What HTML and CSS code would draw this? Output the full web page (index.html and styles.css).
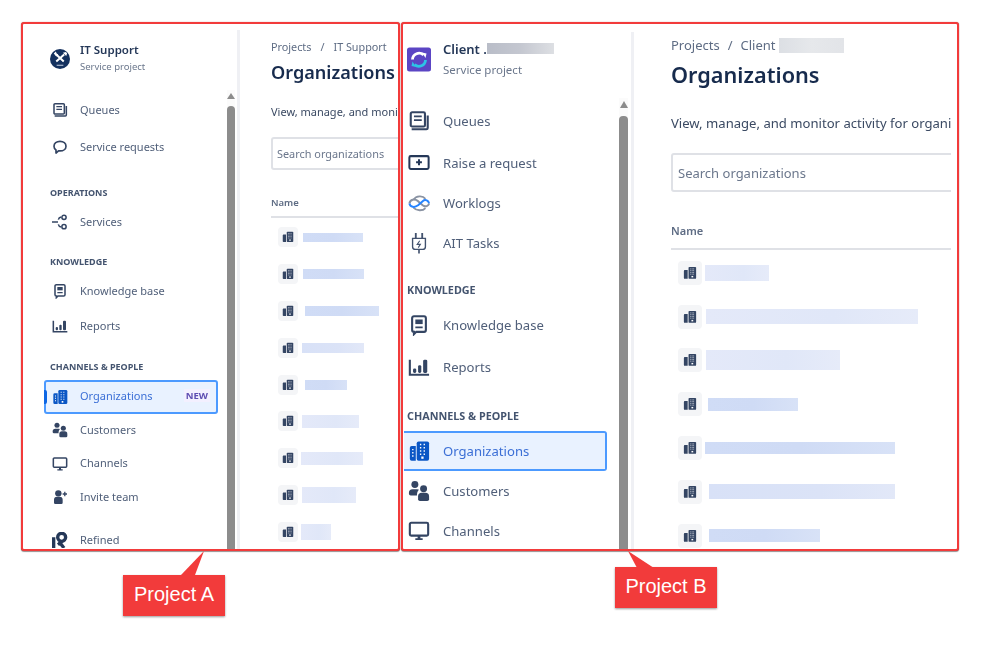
FILE: index.html
```html
<!DOCTYPE html>
<html lang="en">
<head>
    <meta charset="UTF-8">
    <title>Project A and Project B organizations</title>
    <link rel="stylesheet" href="styles.css">
</head>
<body>

    <!-- icon set, reused through <use> -->
    <svg class="icon-defs" aria-hidden="true">
        <symbol id="i-queues" viewBox="0 0 24 24">
            <rect x="3" y="2.500" width="15.500" height="15.500" rx="1.500" fill="none" stroke="currentColor" stroke-width="2.300"/>
            <path d="M6.500 7h8.500M6.500 11h8.500" stroke="currentColor" stroke-width="2"/>
            <path d="M21.500 6v13.500a1.500 1.500 0 0 1-1.500 1.500H4" fill="none" stroke="currentColor" stroke-width="2.300"/>
        </symbol>
        <symbol id="i-chat" viewBox="0 0 24 24">
            <path d="M12 3.500c5.200 0 9 2.900 9 7.200s-3.800 7.200-9 7.200c-.8 0-1.500-.1-2.200-.2L6 21v-4.500C4 15.200 3 13 3 10.700 3 6.400 6.800 3.500 12 3.500z" fill="none" stroke="currentColor" stroke-width="2.500" stroke-linejoin="round"/>
        </symbol>
        <symbol id="i-services" viewBox="0 0 24 24">
            <circle cx="18" cy="5" r="3.200" fill="none" stroke="currentColor" stroke-width="2.300"/>
            <circle cx="18" cy="19" r="3.200" fill="none" stroke="currentColor" stroke-width="2.300"/>
            <path d="M0 12h9M13.500 4.500c-2.500.5-3.500 2-4 4M13.500 19.500c-2.500-.5-3.500-2-4-4" fill="none" stroke="currentColor" stroke-width="2.300"/>
        </symbol>
        <symbol id="i-knowledge" viewBox="0 0 24 24">
            <path d="M6.500 2.500h11a2 2 0 0 1 2 2v13a2 2 0 0 1-2 2H9l-2.500 2.500v-2.500a2 2 0 0 1-2-2v-13a2 2 0 0 1 2-2z" fill="none" stroke="currentColor" stroke-width="2.300"/>
            <rect x="8" y="6" width="8" height="5" fill="currentColor"/>
            <path d="M8 14.500h8" stroke="currentColor" stroke-width="2"/>
        </symbol>
        <symbol id="i-reports" viewBox="0 0 24 24">
            <path d="M2 4v16.500h21" fill="none" stroke="currentColor" stroke-width="2.300"/>
            <rect x="5.500" y="13.500" width="3.500" height="5" rx="1.500" fill="currentColor"/>
            <rect x="11" y="10" width="3.500" height="8.500" rx="1.500" fill="currentColor"/>
            <rect x="16.500" y="4" width="4.500" height="14.500" rx="1.500" fill="currentColor"/>
        </symbol>
        <symbol id="i-org" viewBox="0 0 24 24">
            <path d="M4 6.500h4.500v16H4a2 2 0 0 1-2-2v-12a2 2 0 0 1 2-2z" fill="currentColor"/>
            <path d="M11.500 1.500H21a2 2 0 0 1 2 2v17a2 2 0 0 1-2 2h-9.500a2 2 0 0 1-2-2v-17a2 2 0 0 1 2-2z" fill="currentColor"/>
            <path d="M4.500 10.500h1.500M4.500 14h1.500M4.500 17.500h1.500" stroke="#fff" stroke-width="1.600"/>
            <path d="M13 5h1.500M13 8.500h1.500M13 12h1.500M13 15.500h1.500M17 5h1.500M17 8.500h1.500M17 12h1.500M17 15.500h1.500" stroke="#fff" stroke-width="1.600"/>
            <rect x="14.500" y="18" width="2.500" height="2.500" fill="#fff"/>
        </symbol>
        <symbol id="i-customers" viewBox="0 0 24 24">
            <circle cx="7.500" cy="5" r="3.800" fill="currentColor"/>
            <circle cx="17" cy="9.500" r="3.800" fill="currentColor"/>
            <path d="M1 14a4 4 0 0 1 4-4h5a4 4 0 0 1 2 .6c-1.500 1.500-2.200 3-2.200 6.400H3a2 2 0 0 1-2-2z" fill="currentColor"/>
            <path d="M11 18a4 4 0 0 1 4-4h4a4 4 0 0 1 4 4v3a2 2 0 0 1-2 2h-8a2 2 0 0 1-2-2z" fill="currentColor"/>
        </symbol>
        <symbol id="i-channels" viewBox="0 0 24 24">
            <rect x="2" y="3" width="20" height="14" rx="1.500" fill="none" stroke="currentColor" stroke-width="2.300"/>
            <path d="M10.500 17h3v3h2.500v1.800H8V20h2.500z" fill="currentColor"/>
        </symbol>
        <symbol id="i-invite" viewBox="0 0 24 24">
            <circle cx="9.500" cy="6.500" r="4.800" fill="currentColor"/>
            <path d="M3 16a4.500 4.500 0 0 1 4.500-4.500h4A4.500 4.500 0 0 1 16 16v4.500a2 2 0 0 1-2 2H5a2 2 0 0 1-2-2z" fill="currentColor"/>
            <path d="M16 7.500h6.500M19.200 4.300v6.400" stroke="currentColor" stroke-width="2"/>
        </symbol>
        <symbol id="i-refined" viewBox="0 0 24 24">
            <path d="M2.500 24V8" fill="none" stroke="#253858" stroke-width="5"/>
            <path d="M9 19l6-5" fill="none" stroke="#253858" stroke-width="5"/>
            <path d="M18 24l-7-9" fill="none" stroke="#253858" stroke-width="5"/>
            <circle cx="14.500" cy="8" r="6" fill="none" stroke="#253858" stroke-width="5"/>
        </symbol>
        <symbol id="i-raise" viewBox="0 0 24 24">
            <rect x="1.500" y="4.500" width="21" height="14" rx="1.500" fill="none" stroke="#253858" stroke-width="2.200"/>
            <path d="M12 8v6.500M8.800 11.200h6.400" stroke="#253858" stroke-width="2.200"/>
        </symbol>
        <symbol id="i-worklogs" viewBox="0 0 24 24">
            <path d="M6 8.500c3-4.500 10-5 13-1M6 17c3 3.500 10 4 13 .5" fill="none" stroke="#8a93a3" stroke-width="2"/>
            <path d="M1.500 12.500C2.500 8 7 7 11 10l5 4.500c3 2.500 6.500 .5 7-2" fill="none" stroke="#8a93a3" stroke-width="2.200"/>
            <path d="M1.500 12.500c1 4 5.500 5 9.500 2l5-4.500c3-2.500 6.500-.5 7 2.500" fill="none" stroke="#2684ff" stroke-width="2.200"/>
        </symbol>
        <symbol id="i-plug" viewBox="0 0 24 24">
            <path d="M8.500 1v6M15.500 1v6" stroke="#42526e" stroke-width="2"/>
            <path d="M5 7h14v9a3 3 0 0 1-3 3H8a3 3 0 0 1-3-3z" fill="none" stroke="#42526e" stroke-width="1.500"/>
            <path d="M12.800 9.500L10 13.500h3.500L11.200 17" fill="none" stroke="#42526e" stroke-width="1.200"/>
            <path d="M12 19v4.500" stroke="#42526e" stroke-width="1.800"/>
        </symbol>
        <symbol id="i-tile" viewBox="0 0 24 24">
            <path d="M3 7h5v15H3a1.500 1.500 0 0 1-1.500-1.500v-12A1.500 1.500 0 0 1 3 7z" fill="currentColor"/>
            <path d="M11 1.500h10A1.500 1.500 0 0 1 22.500 3v17.500A1.500 1.500 0 0 1 21 22H11a1.500 1.500 0 0 1-1.500-1.500V3A1.500 1.500 0 0 1 11 1.500z" fill="currentColor"/>
            <path d="M12.500 5h7M12.500 8h7M12.500 11h7M12.500 14h7" stroke="#dfe3ea" stroke-width="1.300" stroke-dasharray="1.500 1"/>
            <rect x="14.500" y="17" width="3" height="2.500" fill="#fff"/>
        </symbol>
    </svg>

    <div class="stage">

        <!-- Project A -->
        <section class="panel panel-a">
            <div class="sidebar">
                <div class="project">
                    <svg class="project-logo" viewBox="0 0 24 24">
                        <circle cx="12" cy="12" r="12" fill="#14315f"/>
                        <path d="M7.500 6.500l9 8.500M17 6.500L7.500 15" stroke="#fff" stroke-width="2.400"/>
                        <path d="M4.500 5.500L7 3l1 2.500 2 1L7.500 9z" fill="#fff"/>
                        <path d="M15.500 4.500l3.500-1 1.500 1.500-1 3.500z" fill="#fff"/>
                        <path d="M8 19.500h8" stroke="#c6d0e0" stroke-width="1.400"/>
                    </svg>
                    <div>
                        <div class="project-name">IT Support</div>
                        <div class="project-type">Service project</div>
                    </div>
                </div>

                <div class="nav-group group-first">
                    <a class="nav-item"><svg class="nav-icon"><use href="#i-queues"/></svg>Queues</a>
                    <a class="nav-item spaced"><svg class="nav-icon"><use href="#i-chat"/></svg>Service requests</a>
                </div>
                <div class="nav-group group-ops">
                    <div class="nav-title">OPERATIONS</div>
                    <a class="nav-item"><svg class="nav-icon"><use href="#i-services"/></svg>Services</a>
                </div>
                <div class="nav-group group-know">
                    <div class="nav-title">KNOWLEDGE</div>
                    <a class="nav-item"><svg class="nav-icon"><use href="#i-knowledge"/></svg>Knowledge base</a>
                    <a class="nav-item nudge"><svg class="nav-icon"><use href="#i-reports"/></svg>Reports</a>
                </div>
                <div class="nav-group group-chan">
                    <div class="nav-title">CHANNELS &amp; PEOPLE</div>
                    <a class="nav-item active"><svg class="nav-icon"><use href="#i-org"/></svg>Organizations<span class="badge">NEW</span></a>
                    <a class="nav-item"><svg class="nav-icon"><use href="#i-customers"/></svg>Customers</a>
                    <a class="nav-item"><svg class="nav-icon"><use href="#i-channels"/></svg>Channels</a>
                    <a class="nav-item"><svg class="nav-icon"><use href="#i-invite"/></svg>Invite team</a>
                </div>
                <div class="nav-group group-apps">
                    <a class="nav-item"><svg class="nav-icon"><use href="#i-refined"/></svg>Refined</a>
                </div>
            </div>

            <div class="scrollbar"><span class="scroll-arrow"></span><span class="scroll-thumb"></span></div>
            <div class="divider"></div>

            <main class="content">
                <div class="crumbs">Projects<span class="crumb-sep">/</span>IT Support</div>
                <h1>Organizations</h1>
                <p class="intro">View, manage, and moni</p>
                <div class="search">Search organizations</div>
                <div class="col-head">Name</div>
                <div class="org-row"><span class="tile"><svg><use href="#i-tile"/></svg></span><span class="bar bar-mid" style="margin-left:5px;width:60px;height:9px"></span></div>
                <div class="org-row"><span class="tile"><svg><use href="#i-tile"/></svg></span><span class="bar bar-mid" style="margin-left:5px;width:61px;height:10px"></span></div>
                <div class="org-row"><span class="tile"><svg><use href="#i-tile"/></svg></span><span class="bar bar-mid" style="margin-left:7px;width:74px;height:10px"></span></div>
                <div class="org-row"><span class="tile"><svg><use href="#i-tile"/></svg></span><span class="bar" style="margin-left:4px;width:62px;height:10px"></span></div>
                <div class="org-row"><span class="tile"><svg><use href="#i-tile"/></svg></span><span class="bar bar-mid" style="margin-left:7px;width:42px;height:10px"></span></div>
                <div class="org-row"><span class="tile"><svg><use href="#i-tile"/></svg></span><span class="bar bar-light" style="margin-left:4px;width:57px;height:13px"></span></div>
                <div class="org-row"><span class="tile"><svg><use href="#i-tile"/></svg></span><span class="bar bar-light" style="margin-left:3px;width:62px;height:13px"></span></div>
                <div class="org-row"><span class="tile"><svg><use href="#i-tile"/></svg></span><span class="bar bar-light" style="margin-left:4px;width:54px;height:16px"></span></div>
                <div class="org-row"><span class="tile"><svg><use href="#i-tile"/></svg></span><span class="bar bar-light" style="margin-left:3px;width:30px;height:16px"></span></div>
            </main>
        </section>

        <!-- Project B -->
        <section class="panel panel-b">
            <div class="sidebar">
                <div class="project">
                    <svg class="project-logo" viewBox="0 0 24 24">
                        <rect width="24" height="24" rx="2.500" fill="#5b45c4"/>
                        <path d="M5.500 12a6.500 6.500 0 0 1 11-4.500" fill="none" stroke="#fff" stroke-width="2.800"/>
                        <path d="M15 5l4.500 1-1 4.500z" fill="#fff"/>
                        <path d="M18.500 12.500a6.500 6.500 0 0 1-11 4.500" fill="none" stroke="#2cc4e6" stroke-width="2.800"/>
                        <path d="M9 19.500l-4.500-1 1-4.500z" fill="#2cc4e6"/>
                    </svg>
                    <div>
                        <div class="project-name">Client .<span class="redact redact-dark"></span></div>
                        <div class="project-type">Service project</div>
                    </div>
                </div>

                <div class="nav-group group-first">
                    <a class="nav-item"><svg class="nav-icon"><use href="#i-queues"/></svg>Queues</a>
                    <a class="nav-item spaced"><svg class="nav-icon"><use href="#i-raise"/></svg>Raise a request</a>
                    <a class="nav-item"><svg class="nav-icon"><use href="#i-worklogs"/></svg>Worklogs</a>
                    <a class="nav-item"><svg class="nav-icon"><use href="#i-plug"/></svg>AIT Tasks</a>
                </div>
                <div class="nav-group group-know">
                    <div class="nav-title">KNOWLEDGE</div>
                    <a class="nav-item"><svg class="nav-icon"><use href="#i-knowledge"/></svg>Knowledge base</a>
                    <a class="nav-item spaced"><svg class="nav-icon"><use href="#i-reports"/></svg>Reports</a>
                </div>
                <div class="nav-group group-chan">
                    <div class="nav-title">CHANNELS &amp; PEOPLE</div>
                    <a class="nav-item active"><svg class="nav-icon"><use href="#i-org"/></svg>Organizations</a>
                    <a class="nav-item"><svg class="nav-icon"><use href="#i-customers"/></svg>Customers</a>
                    <a class="nav-item"><svg class="nav-icon"><use href="#i-channels"/></svg>Channels</a>
                </div>
            </div>

            <div class="scrollbar"><span class="scroll-arrow"></span><span class="scroll-thumb"></span></div>
            <div class="divider"></div>

            <main class="content">
                <div class="crumbs">Projects<span class="crumb-sep">/</span>Client<span class="redact"></span></div>
                <h1>Organizations</h1>
                <p class="intro">View, manage, and monitor activity for organi</p>
                <div class="search">Search organizations</div>
                <div class="col-head">Name</div>
                <div class="org-row"><span class="tile"><svg><use href="#i-tile"/></svg></span><span class="bar bar-light" style="margin-left:3px;width:64px;height:16px"></span></div>
                <div class="org-row"><span class="tile"><svg><use href="#i-tile"/></svg></span><span class="bar bar-light" style="margin-left:4px;width:212px;height:15px"></span></div>
                <div class="org-row"><span class="tile"><svg><use href="#i-tile"/></svg></span><span class="bar bar-light" style="margin-left:4px;width:134px;height:20px"></span></div>
                <div class="org-row"><span class="tile"><svg><use href="#i-tile"/></svg></span><span class="bar bar-mid" style="margin-left:6px;width:90px;height:13px"></span></div>
                <div class="org-row"><span class="tile"><svg><use href="#i-tile"/></svg></span><span class="bar bar-mid" style="margin-left:3px;width:190px;height:12px"></span></div>
                <div class="org-row"><span class="tile"><svg><use href="#i-tile"/></svg></span><span class="bar" style="margin-left:7px;width:186px;height:15px"></span></div>
                <div class="org-row"><span class="tile"><svg><use href="#i-tile"/></svg></span><span class="bar bar-mid" style="margin-left:7px;width:111px;height:13px"></span></div>
            </main>
        </section>
    </div>

    <!-- annotation labels -->
    <div class="callout callout-a">
        <svg class="callout-tail" viewBox="0 0 30 26"><polygon points="23,0 0,24 14,24" fill="#f23b3b"/></svg>
        Project A
    </div>
    <div class="callout callout-b">
        <svg class="callout-tail" viewBox="0 0 30 18"><polygon points="0,0 9,17 26,17" fill="#f23b3b"/></svg>
        Project B
    </div>

</body>
</html>
```

FILE: styles.css
```css
body {
    margin: 0;
    height: 655px;
    overflow: hidden;
    position: relative;
    background-color: white;
    font-family: "Noto Sans", "Open Sans", sans-serif;
    color: #42526e;
}

.icon-defs {
    display: none;
}

/* the reference is a scaled-up capture, so everything is a little soft */
.stage {
    display: flex;
    gap: 1px;
    padding: 22px 0 0 21px;
    filter: blur(0.3px);
}

.panel {
    display: flex;
    box-sizing: border-box;
    height: 529px;
    border: 2px solid #f23b3b;
    border-radius: 3px;
    box-shadow: 0 0 1px rgba(120, 0, 0, 0.6), 0 1px 1px rgba(0, 0, 0, 0.4);
    overflow: hidden;
    background-color: white;
}

.panel-a {
    width: 379px;
}

.panel-b {
    width: 558px;
}

/* sidebar */

.sidebar {
    flex: none;
    box-sizing: border-box;
}

.project {
    display: flex;
    align-items: center;
}

.project-name {
    font-weight: 600;
    color: #253858;
    white-space: nowrap;
}

.project-type {
    color: #6b778c;
    white-space: nowrap;
}

.nav-group {
    display: flex;
    flex-direction: column;
}

.nav-title {
    font-weight: 700;
    color: #44546f;
    white-space: nowrap;
}

.nav-item {
    display: flex;
    align-items: center;
    flex: none;
    box-sizing: border-box;
    position: relative;
    color: #505f79;
    white-space: nowrap;
}

.nav-icon {
    flex: none;
    color: #344563;
}

.active {
    background-color: #e9f2ff;
    border: 2px solid #4c9aff;
    border-radius: 3px;
    color: #3b6fd6;
}

.active .nav-icon {
    color: #0b57c5;
}

.badge {
    margin-left: auto;
    padding: 0 2px;
    background-color: #f3f0ff;
    color: #5e4db2;
    font-weight: 700;
}

.redact {
    display: inline-block;
    background: linear-gradient(90deg, #dcdfe4, #e6e8eb 50%, #e2e4e8);
}

.redact-dark {
    background: linear-gradient(90deg, #b9bdc8, #c4c7d0 50%, #dddfe3);
}

/* scrollbar and the thin line next to it */

.scrollbar {
    flex: none;
    display: flex;
    flex-direction: column;
    align-items: center;
    background-color: #fbfbfb;
}

.scroll-arrow {
    flex: none;
    width: 0;
    height: 0;
    border-style: solid;
    border-color: transparent transparent #8c8c8c;
}

.scroll-thumb {
    flex: 1;
    width: 100%;
    background-color: #8c8c8c;
    border-radius: 4px 4px 0 0;
}

.divider {
    flex: none;
    background-color: #eff0f4;
}

/* main column */

.content {
    flex: 1;
    min-width: 0;
    overflow: hidden;
}

.crumbs {
    display: flex;
    align-items: center;
    color: #5e6c84;
    white-space: nowrap;
}

h1 {
    margin: 0;
    font-weight: 600;
    color: #172b4d;
    white-space: nowrap;
}

.intro {
    margin: 0;
    color: #3b4a63;
    white-space: nowrap;
}

.search {
    display: flex;
    align-items: center;
    box-sizing: border-box;
    width: 420px;
    border: 2px solid #dfe1e6;
    border-radius: 3px;
    color: #6b778c;
}

.col-head {
    margin-bottom: 1px;
    font-weight: 600;
    color: #5e6c84;
    border-bottom: 2px solid #dfe1e6;
    width: 420px;
}

.org-row {
    display: flex;
    align-items: center;
}

.tile {
    flex: none;
    display: flex;
    align-items: center;
    justify-content: center;
    background-color: #f4f5f7;
    border-radius: 4px;
    color: #344563;
}

.bar {
    flex: none;
    background: linear-gradient(90deg, #d8e1f7, #dbe3f7 60%, #e2e8f8);
}

.bar-mid {
    background: linear-gradient(90deg, #d0dcf6, #cfdbf5 50%, #d8e2f7);
}

.bar-light {
    background: linear-gradient(90deg, #e4e9f9, #e0e7f8 60%, #e6ebf9);
}

/* Project A sizes */

.panel-a .sidebar {
    width: 204px;
    padding-left: 21px;
    font-size: 11px;
}

.panel-a .project {
    margin: 18px 0 18px 6px;
    gap: 10px;
    line-height: 16px;
}

.panel-a .project-logo {
    width: 20px;
    height: 20px;
}

.panel-a .project-name {
    font-size: 11.500px;
}

.panel-a .project-type {
    font-size: 9.500px;
    margin-top: 1px;
}

.panel-a .nav-title {
    height: 14px;
    line-height: 14px;
    font-size: 9px;
    margin: 0 0 5px 6px;
}

.panel-a .nav-item {
    width: 174px;
    height: 34px;
    padding-left: 8px;
    padding-bottom: 2px;
}

.panel-a .nav-icon {
    width: 16px;
    height: 16px;
    margin-top: 2px;
    margin-right: 12px;
}

.panel-a .spaced {
    margin-top: 3px;
}

.panel-a .nudge {
    margin-top: 1px;
}

.panel-a .group-ops {
    margin-top: 22px;
}

.panel-a .group-know {
    margin-top: 16px;
}

.panel-a .group-chan {
    margin-top: 17px;
}

.panel-a .group-chan .nav-title {
    margin-bottom: 6px;
}

.panel-a .group-chan .nav-item {
    height: 33.500px;
}

.panel-a .group-apps {
    margin-top: 9px;
}

.panel-a .active {
    padding-left: 6px;
    padding-right: 6px;
}

/* little marker on the left edge of the selected item */
.panel-a .active::before {
    content: "";
    position: absolute;
    left: -2px;
    top: 8px;
    bottom: 8px;
    width: 3px;
    border-radius: 0 2px 2px 0;
    background-color: #0c66e4;
}

.panel-a .badge {
    font-size: 9.500px;
}

.panel-a .scrollbar {
    width: 8px;
    margin-top: 66px;
    padding-top: 3px;
    margin-right: 2px;
}

.panel-a .scroll-arrow {
    border-width: 0 4px 6px;
    margin-bottom: 7px;
}

.panel-a .divider {
    width: 3px;
    margin-top: 6px;
}

.panel-a .content {
    padding-left: 31px;
}

.panel-a .crumbs {
    margin-top: 15px;
    font-size: 10.800px;
    line-height: 16px;
}

.panel-a .crumb-sep {
    margin: 0 9px;
}

.panel-a h1 {
    margin-top: 5px;
    font-size: 18.100px;
    line-height: 24px;
}

.panel-a .intro {
    margin-top: 20px;
    font-size: 11px;
    line-height: 16px;
}

.panel-a .search {
    margin-top: 17px;
    height: 33px;
    padding-left: 4px;
    font-size: 10.900px;
}

.panel-a .col-head {
    margin-top: 25px;
    padding-bottom: 5px;
    font-size: 9.500px;
    line-height: 16px;
}

.panel-a .org-row {
    height: 36.800px;
    padding-left: 7px;
}

.panel-a .tile {
    width: 20px;
    height: 20px;
}

.panel-a .tile svg {
    width: 12px;
    height: 12px;
}

/* Project B sizes */

.panel-b .sidebar {
    width: 216px;
    padding-left: 1px;
    font-size: 13.100px;
}

.panel-b .project {
    margin: 17px 0 23px 3px;
    gap: 12px;
}

.panel-b .project-logo {
    width: 24px;
    height: 25px;
}

.panel-b .project-name {
    font-size: 13px;
    line-height: 16px;
}

.panel-b .project-type {
    font-size: 11.500px;
    line-height: 16px;
    margin-top: 5px;
}

.panel-b .redact {
    width: 67px;
    height: 11px;
}

.panel-b .nav-title {
    height: 16px;
    line-height: 16px;
    font-size: 10.800px;
    margin: 0 0 7px 3px;
}

.panel-b .nav-item {
    width: 203px;
    height: 40px;
    padding-left: 4px;
}

.panel-b .nav-icon {
    width: 22px;
    height: 22px;
    margin-right: 13px;
}

.panel-b .spaced {
    margin-top: 2px;
}

.panel-b .group-know {
    margin-top: 19px;
}

.panel-b .group-chan {
    margin-top: 21px;
}

.panel-b .active {
    border-left: none;
    border-radius: 0 3px 3px 0;
}

.panel-b .scrollbar {
    width: 9px;
    margin-top: 74px;
    padding-top: 3px;
    margin-right: 3px;
}

.panel-b .scroll-arrow {
    border-width: 0 4.500px 7px;
    margin-bottom: 8px;
}

.panel-b .divider {
    width: 3px;
    margin-top: 8px;
}

.panel-b .content {
    margin-right: 6px;
    padding-left: 37px;
}

.panel-b .crumbs {
    margin-top: 13px;
    font-size: 13px;
    line-height: 16px;
}

.panel-b .crumb-sep {
    margin: 0 8px;
}

.panel-b .crumbs .redact {
    width: 65px;
    height: 15px;
    margin-left: 3px;
}

.panel-b h1 {
    margin-top: 7px;
    font-size: 21.700px;
    line-height: 30px;
}

.panel-b .intro {
    margin-top: 25px;
    font-size: 13.100px;
    line-height: 16px;
}

.panel-b .search {
    margin-top: 22px;
    height: 39px;
    padding-left: 5px;
    font-size: 13px;
}

.panel-b .col-head {
    margin-top: 31px;
    padding-bottom: 9px;
    font-size: 11px;
    line-height: 16px;
}

.panel-b .org-row {
    height: 43.800px;
    padding-left: 7px;
}

.panel-b .tile {
    width: 24px;
    height: 24px;
}

.panel-b .tile svg {
    width: 14px;
    height: 14px;
}

/* callouts sit over the page below the panels */

.callout {
    position: absolute;
    box-sizing: border-box;
    width: 102px;
    height: 41px;
    background-color: #f23b3b;
    box-shadow: 0 1px 2px rgba(0, 0, 0, 0.4);
    color: white;
    font-family: "Liberation Sans", Arial, sans-serif;
    font-size: 20px;
    line-height: 39px;
    text-align: center;
}

.callout-a {
    left: 123px;
    top: 575px;
}

.callout-b {
    left: 615px;
    top: 567px;
}

.callout-tail {
    position: absolute;
}

.callout-a .callout-tail {
    left: 58px;
    top: -24px;
    width: 30px;
    height: 26px;
}

.callout-b .callout-tail {
    left: 13px;
    top: -16px;
    width: 30px;
    height: 18px;
}
```
